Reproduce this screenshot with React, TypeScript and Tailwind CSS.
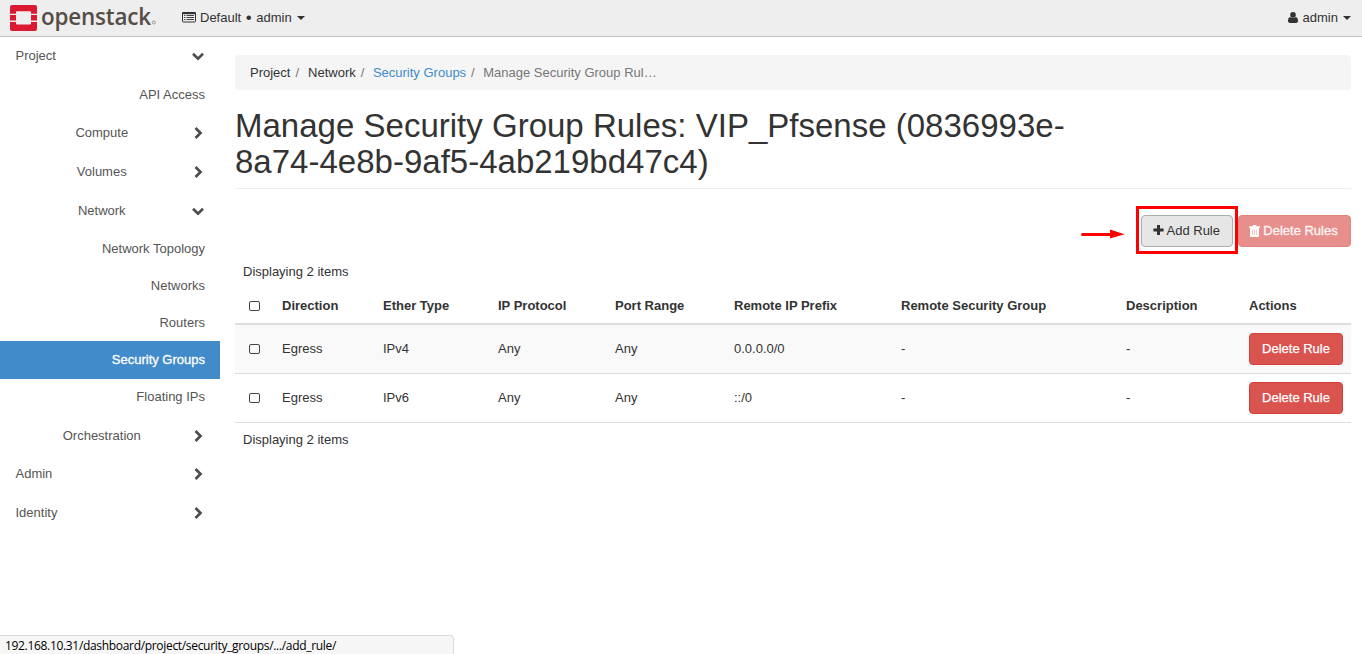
import React from "react";

type NavItem = {
  label: string;
  row: string;
  kind: "top" | "group" | "leaf";
  open?: boolean;
  active?: boolean;
};

const nav: NavItem[] = [
  { label: "Project", row: "h-[39px]", kind: "top", open: true },
  { label: "API Access", row: "h-[38px]", kind: "leaf" },
  { label: "Compute", row: "h-[39px]", kind: "group" },
  { label: "Volumes", row: "h-[39px]", kind: "group" },
  { label: "Network", row: "h-[38px]", kind: "group", open: true },
  { label: "Network Topology", row: "h-[37px]", kind: "leaf" },
  { label: "Networks", row: "h-[37px]", kind: "leaf" },
  { label: "Routers", row: "h-[37px]", kind: "leaf" },
  { label: "Security Groups", row: "h-[38px] -mb-px", kind: "leaf", active: true },
  { label: "Floating IPs", row: "h-[39px]", kind: "leaf" },
  { label: "Orchestration", row: "h-[38px]", kind: "group" },
  { label: "Admin", row: "h-[39px]", kind: "top" },
  { label: "Identity", row: "h-[38px]", kind: "top" },
];

const columns = [
  { label: "Direction", width: "w-[101px]" },
  { label: "Ether Type", width: "w-[115px]" },
  { label: "IP Protocol", width: "w-[117px]" },
  { label: "Port Range", width: "w-[119px]" },
  { label: "Remote IP Prefix", width: "w-[167px]" },
  { label: "Remote Security Group", width: "w-[225px]" },
  { label: "Description", width: "w-[123px]" },
  { label: "Actions", width: "w-[110px]" },
];

const rules = [
  ["Egress", "IPv4", "Any", "Any", "0.0.0.0/0", "-", "-"],
  ["Egress", "IPv6", "Any", "Any", "::/0", "-", "-"],
];

function Chevron({ open }: { open?: boolean }) {
  return (
    <svg
      width="14"
      height="14"
      viewBox="0 0 14 14"
      className="mt-[3px] shrink-0"
      fill="none"
      stroke="#4d4d4d"
      strokeWidth="2.7"
    >
      <path d={open ? "M2 4.8 L7 9.6 L12 4.8" : "M4.5 2 L9.5 7 L4.5 12"} />
    </svg>
  );
}

function Caret() {
  return (
    <svg width="8" height="4" viewBox="0 0 8 4" className="shrink-0">
      <path d="M0 0H8L4 4Z" fill="#333" />
    </svg>
  );
}

function Logo() {
  return (
    <div className="flex w-[160px] shrink-0 items-start pl-[10px]">
      <svg width="27" height="26" viewBox="10 5 27 26" className="mt-[5px] shrink-0" fill="#da1a32">
        <path d="M12 5H35Q37 5 37 7V13.7H31V12.2Q31 11.2 30 11.2H17Q16 11.2 16 12.2V13.7H10V7Q10 5 12 5Z" />
        <path d="M10 15H16V20.6H10ZM31 15H37V20.6H31Z" />
        <path d="M10 22H16V23.6Q16 24.6 17 24.6H30Q31 24.6 31 23.6V22H37V29Q37 31 35 31H12Q10 31 10 29Z" />
      </svg>
      <span className="ml-[4px] block h-[34px] w-[111px] origin-left scale-x-[0.935] font-['Open_Sans',sans-serif] text-[24px] leading-[31px] font-semibold tracking-[-0.2px] text-[#554d46]">
        openstack
      </span>
      <svg width="5" height="5" viewBox="0 0 5 5" className="mt-[20px] -ml-px shrink-0">
        <circle cx="2.8" cy="2.5" r="1.5" fill="none" stroke="#9a9591" strokeWidth="1" />
      </svg>
    </div>
  );
}

function Checkbox() {
  return <span className="mx-auto block h-[10px] w-[11px] rounded-[2px] border border-[#444]" />;
}

export default function App() {
  return (
    <div className="relative flex h-[654px] w-[1362px] flex-col overflow-hidden bg-white font-['Liberation_Sans',Arial,sans-serif] text-[13px] leading-[19px] text-[#333]">
      <header className="flex h-[37px] shrink-0 items-start border-b border-[#c4c4c4] bg-[#eee]">
        <Logo />
        <div className="flex h-[35px] items-center pl-[22px]">
          <svg width="14" height="11" viewBox="0 0 14 11" className="mr-1 shrink-0">
            <rect x="0.5" y="0.5" width="13" height="9.5" rx="0.8" fill="none" stroke="#333" />
            <path d="M0.3 1.2H13.7" stroke="#333" strokeWidth="2" />
            <path d="M2 3.5H3.4M4.5 3.5H12M2 5.5H3.4M4.5 5.5H12M2 7.5H3.4M4.5 7.5H12" stroke="#444" strokeWidth="1" />
          </svg>
          <span className="mr-[5px] flex">
            Default
            <span className="flex w-[15px] items-center justify-center text-[17px]">•</span>
            admin
          </span>
          <Caret />
        </div>
        <div className="ml-auto flex h-[35px] items-center pr-[11px]">
          <svg width="10" height="11" viewBox="0 0 10 11" className="mr-[5px] shrink-0" fill="#333">
            <circle cx="5" cy="2.9" r="2.8" />
            <path d="M2.3 4.9C.7 5.1 0 6.8 0 8.8C0 10.1.8 11 1.9 11H8.1C9.2 11 10 10.1 10 8.8C10 6.8 9.3 5.1 7.7 4.9C6.2 6.5 3.8 6.5 2.3 4.9Z" />
          </svg>
          <span className="mr-[5px]">admin</span>
          <Caret />
        </div>
      </header>

      <div className="flex flex-1">
        <nav className="w-[220px] shrink-0 text-[#555]">
          {nav.map((item) => (
            <div
              key={item.label}
              className={`flex pt-[9px] pr-[15px] pl-[15.5px] ${item.row} ${
                item.kind === "leaf" ? "justify-end" : "justify-between"
              } ${item.active ? "bg-[#428bca] text-white [-webkit-text-stroke:0.3px_white]" : ""}`}
            >
              {item.kind === "group" ? (
                <span className="w-[172.5px] shrink-0 text-center">{item.label}</span>
              ) : (
                <span>{item.label}</span>
              )}
              {item.kind !== "leaf" && <Chevron open={item.open} />}
            </div>
          ))}
        </nav>

        <main className="w-[1131px] shrink-0 pt-[18px] pl-[15px]">
          <ol className="flex h-[35px] items-center rounded-[4px] bg-[#f5f5f5] px-[15px]">
            <li>Project</li>
            <li className="pr-[9px] pl-[5px] text-[#777]">/</li>
            <li>Network</li>
            <li className="pr-[8.5px] pl-[5px] text-[#777]">/</li>
            <li className="text-[#428bca]">Security Groups</li>
            <li className="pr-[8.5px] pl-[5px] text-[#777]">/</li>
            <li className="text-[#777]">Manage Security Group Rul…</li>
          </ol>

          <h1 className="mt-[18px] h-[81px] w-[850px] text-[33px] leading-[36px] tracking-[0.01px]">
            Manage Security Group Rules: VIP_Pfsense (0836993e-8a74-4e8b-9af5-4ab219bd47c4)
          </h1>
          <div className="-mt-px h-px bg-[#eee]" />

          <div className="flex h-[65px] items-start justify-end pt-[17px]">
            <svg width="44" height="10" viewBox="0 0 44 10" className="mt-[23px] mr-[11px]">
              <path d="M1.5 5.5H31" stroke="#f00" strokeWidth="3" strokeLinecap="round" />
              <path d="M29 .5L43.5 5.2L29 9.6Z" fill="#f00" />
            </svg>
            <div className="h-[48px] w-[102px] border-[3px] border-[#f00] px-[2px] pt-[6px]">
              <button className="flex h-[32px] w-[92px] items-center justify-center rounded-[4px] border border-[#adadad] bg-[#e6e6e6] pb-px">
                <svg width="11" height="10" viewBox="0 0 11 10" className="-mt-px mr-[2.5px] -ml-px">
                  <path d="M5.5 0V10M.4 5H10.6" stroke="#333" strokeWidth="3" />
                </svg>
                Add Rule
              </button>
            </div>
            <button className="mt-[9px] flex h-[32px] w-[113px] items-center justify-center rounded-[4px] border border-[#e48481] bg-[#e68f8c] pr-px pb-px text-[#fdf3f3] [-webkit-text-stroke:0.35px_#fdf3f3]">
              <svg width="11" height="12" viewBox="0 0 11 12" className="mr-[3px] -ml-px">
                <path
                  fillRule="evenodd"
                  fill="#fff"
                  stroke="none"
                  d="M3.5 1.2L4 0H7L7.5 1.2H11V2.7H0V1.2ZM1 2.7H10V10.7Q10 12 8.8 12H2.2Q1 12 1 10.7ZM3.1 4.6V10H3.6V4.6ZM5.25 4.6V10H5.75V4.6ZM7.4 4.6V10H7.9V4.6Z"
                />
              </svg>
              Delete Rules
            </button>
          </div>

          <div className="mt-[8px] pl-[8px]">Displaying 2 items</div>
          <table className="mt-[7px] w-[1116px] table-fixed border-separate border-spacing-0 text-left">
            <thead>
              <tr className="h-[37px]">
                <th className="w-[39px] border-b-2 border-[#ddd] p-0 pt-px align-middle">
                  <Checkbox />
                </th>
                {columns.map((c) => (
                  <th
                    key={c.label}
                    className={`${c.width} border-b-2 border-[#ddd] px-[8px] py-0 align-middle font-bold whitespace-nowrap`}
                  >
                    {c.label}
                  </th>
                ))}
              </tr>
            </thead>
            <tbody>
              {rules.map((rule, i) => (
                <tr key={rule[1]} className={i === 0 ? "h-[49px] bg-[#f9f9f9]" : "h-[49px]"}>
                  <td className="border-b border-[#ddd] p-0">
                    <Checkbox />
                  </td>
                  {rule.map((cell, j) => (
                    <td key={j} className="border-b border-[#ddd] px-[8px] pb-px">
                      {cell}
                    </td>
                  ))}
                  <td className="border-b border-[#ddd] px-[8px]">
                    <button className="block h-[32px] w-[94px] rounded-[4px] border border-[#d43f3a] bg-[#d9534f] pb-px text-white [-webkit-text-stroke:0.25px_white]">
                      Delete Rule
                    </button>
                  </td>
                </tr>
              ))}
            </tbody>
          </table>
          <div className="mt-[7px] pl-[8px]">Displaying 2 items</div>
        </main>
      </div>

      <div className="absolute bottom-0 left-0 h-[19px] w-[454px] rounded-tr-[4px] border-t border-r border-[#d9d9d9] bg-[#f6f6f6] pt-[2px] pl-[5px] font-['Open_Sans',sans-serif] text-[12px] leading-[16px] tracking-[-0.32px] text-black">
        192.168.10.31/dashboard/project/security_groups/.../add_rule/
      </div>
    </div>
  );
}
